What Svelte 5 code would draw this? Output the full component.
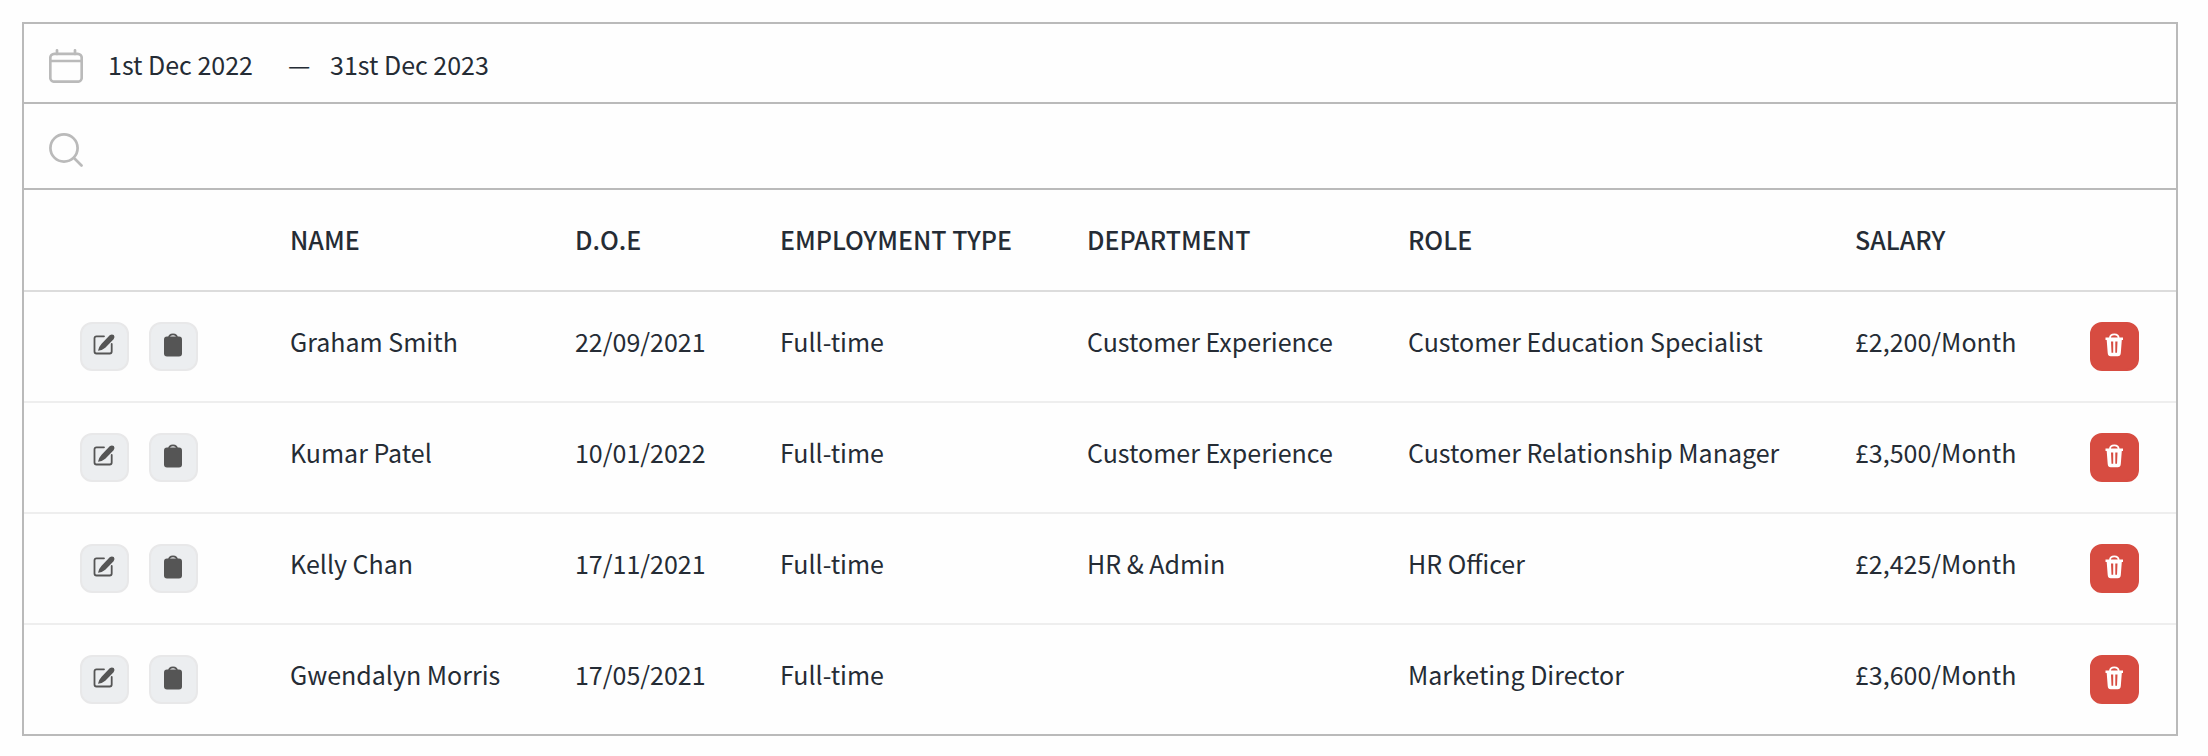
<script>
  let startDate = $state("1st Dec 2022");
  let endDate = $state("31st Dec 2023");
  let query = $state("");

  // width = share of the table, see colWidth()
  const columns = [
    { key: "actions", label: "", width: 229 },
    { key: "name", label: "NAME", width: 285 },
    { key: "doe", label: "D.O.E", width: 205 },
    { key: "type", label: "EMPLOYMENT TYPE", width: 307 },
    { key: "department", label: "DEPARTMENT", width: 321 },
    { key: "role", label: "ROLE", width: 447 },
    { key: "salary", label: "SALARY", width: 235 },
    { key: "remove", label: "", width: 123 },
  ];

  let employees = $state([
    { name: "Graham Smith", doe: "22/09/2021", type: "Full-time", department: "Customer Experience", role: "Customer Education Specialist", salary: "£2,200/Month" },
    { name: "Kumar Patel", doe: "10/01/2022", type: "Full-time", department: "Customer Experience", role: "Customer Relationship Manager", salary: "£3,500/Month" },
    { name: "Kelly Chan", doe: "17/11/2021", type: "Full-time", department: "HR & Admin", role: "HR Officer", salary: "£2,425/Month" },
    { name: "Gwendalyn Morris", doe: "17/05/2021", type: "Full-time", department: "", role: "Marketing Director", salary: "£3,600/Month" },
  ]);

  const total = columns.reduce((sum, c) => sum + c.width, 0);
  const colWidth = (c) => `${(c.width / total) * 100}%`;

  let visible = $derived(
    employees.filter((e) => e.name.toLowerCase().includes(query.toLowerCase()))
  );

  function remove(employee) {
    employees = employees.filter((e) => e.name !== employee.name);
  }
</script>

<main class="panel">
  <div class="bar dates">
    <svg class="bar-icon" viewBox="0 0 34 34" aria-hidden="true">
      <rect x="1.3" y="4.8" width="31.4" height="27.9" rx="4" />
      <path d="M2 12H32M8 1.300V5M26 1.300V5" />
    </svg>
    <input class="date" aria-label="Start date" bind:value={startDate} />
    <span class="dash">—</span>
    <input class="date" aria-label="End date" bind:value={endDate} />
  </div>

  <div class="bar search">
    <svg class="bar-icon" viewBox="0 0 34 34" aria-hidden="true">
      <circle cx="15" cy="15" r="13.6" />
      <path d="M25 25L32.5 32.5" />
    </svg>
    <input class="query" type="search" aria-label="Search employees" bind:value={query} />
  </div>

  <table>
    <colgroup>
      {#each columns as column}
        <col style="width: {colWidth(column)}" />
      {/each}
    </colgroup>
    <thead>
      <tr>
        {#each columns as column}
          <th scope="col">{column.label}</th>
        {/each}
      </tr>
    </thead>
    <tbody>
      {#each visible as employee (employee.name)}
        <tr>
          <td class="controls">
            <div class="buttons">
              <button class="btn" aria-label="Edit {employee.name}">
                <svg viewBox="1 0 25 25" aria-hidden="true">
                  <path class="line" d="M13 4.3H5.5Q3.5 4.3 3.5 6.3V19.5Q3.5 21.5 5.5 21.5H18.7Q20.7 21.5 20.7 19.5V12" />
                  <path d="M7 18.800Q8 14.300 10.600 11.700L18.700 3.300Q20.900 1.600 22.800 3.100Q24.400 5.200 22.600 7.300L14.300 15.700Q11.500 18.200 7 18.800Z" />
                </svg>
              </button>
              <button class="btn" aria-label="Copy {employee.name}">
                <svg viewBox="0 0 25 25" aria-hidden="true">
                  <rect x="3" y="4.5" width="18" height="20" rx="3" />
                  <path class="line" d="M8 6Q8 2.300 12 2.300T16 6" />
                </svg>
              </button>
            </div>
          </td>
          <td>{employee.name}</td>
          <td>{employee.doe}</td>
          <td>{employee.type}</td>
          <td>{employee.department}</td>
          <td>{employee.role}</td>
          <td>{employee.salary}</td>
          <td class="controls">
            <button class="btn danger" aria-label="Delete {employee.name}" onclick={() => remove(employee)}>
              <svg viewBox="0 0 25 25" aria-hidden="true">
                <path class="line" d="M8 6Q8 2.300 12.300 2.300T16.600 6" />
                <path fill-rule="evenodd" d="M3.500 5.500H21V8H19.800L18.800 21Q18.500 24.300 15.800 24.300H8.700Q6 24.300 5.700 21L4.700 8H3.500ZM9 9.500L9.500 20.800H11.200V9.500ZM13.300 9.500V20.800H15L15.500 9.500Z" />
              </svg>
            </button>
          </td>
        </tr>
      {/each}
    </tbody>
  </table>
</main>

<style>
  :global(body) {
    background: #fefefe;
  }

  .panel {
    margin: 22px 30px 20px 22px;
    border: 2px solid #bababa;
    color: #252c35;
    font-family: "Noto Sans CJK SC", "Noto Sans", sans-serif;
    font-size: 25px;
    line-height: 36px;
  }

  .bar {
    display: flex;
    align-items: center;
    box-sizing: border-box;
    padding: 0 25px;
    border-bottom: 2px solid #bababa;
  }

  .dates {
    height: 80px;
    padding-top: 6px;
  }

  .search {
    height: 86px;
    padding-top: 8px;
  }

  .bar-icon {
    flex: none;
    width: 34px;
    height: 34px;
    margin-right: 25px;
    fill: none;
    stroke: #bababa;
    stroke-width: 2.7;
    stroke-linecap: round;
  }

  input {
    padding: 0;
    border: 0;
    outline: 0;
    background: none;
    color: inherit;
    font: inherit;
  }

  .date {
    width: 180px;
    padding-bottom: 4px;
  }

  .dash {
    width: 42px;
    padding-bottom: 4px;
  }

  .query {
    flex: 1;
    appearance: none;
  }

  table {
    width: 100%;
    table-layout: fixed;
    border-collapse: separate;
    border-spacing: 0;
  }

  th {
    height: 98px;
    padding: 0 0 2px 37px;
    border-bottom: 2px solid #dcdcdc;
    font-weight: 500;
    text-align: left;
    white-space: nowrap;
  }

  td {
    height: 97px;
    padding: 0 0 12px 37px;
    border-bottom: 2px solid #eeeeee;
    white-space: nowrap;
  }

  tr:last-child td {
    border-bottom: 0;
  }

  .controls {
    height: 109px;
    padding-bottom: 0;
  }

  .buttons {
    display: flex;
    gap: 20px;
    padding-left: 19px;
  }

  .btn {
    display: flex;
    justify-content: center;
    box-sizing: border-box;
    width: 49px;
    height: 49px;
    padding: 8px 0 0;
    border: 2px solid #e8e8e9;
    border-radius: 12px;
    background: #eceef0;
    color: #555555;
    cursor: pointer;
  }

  .btn svg {
    width: 25px;
    height: 25px;
    fill: currentColor;
  }

  .btn .line {
    fill: none;
    stroke: currentColor;
    stroke-width: 1.8;
    stroke-linecap: round;
  }

  .danger {
    border-color: #d74c41;
    background: #d74c41;
    color: #ffffff;
  }
</style>
